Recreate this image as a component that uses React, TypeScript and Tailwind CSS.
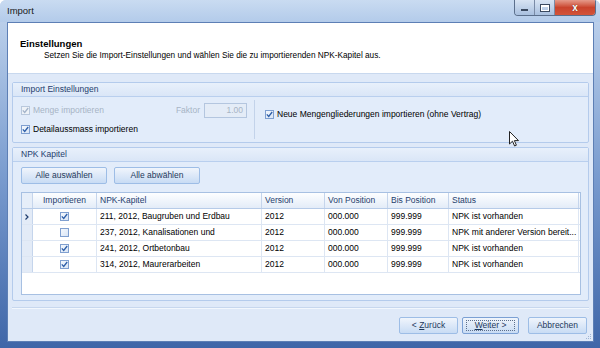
import React from "react";

const rows = [
  { checked: true, current: true, name: "211, 2012, Baugruben und Erdbau", version: "2012", von: "000.000", bis: "999.999", status: "NPK ist vorhanden" },
  { checked: false, current: false, name: "237, 2012, Kanalisationen und", version: "2012", von: "000.000", bis: "999.999", status: "NPK mit anderer Version bereit..." },
  { checked: true, current: false, name: "241, 2012, Ortbetonbau", version: "2012", von: "000.000", bis: "999.999", status: "NPK ist vorhanden" },
  { checked: true, current: false, name: "314, 2012, Maurerarbeiten", version: "2012", von: "000.000", bis: "999.999", status: "NPK ist vorhanden" },
];

const cols = "grid grid-cols-[11px_64px_165px_63px_63px_61px_130px]";

function Check({ checked, disabled }: { checked: boolean; disabled?: boolean }) {
  return (
    <span
      className={`inline-flex w-[9px] h-[9px] shrink-0 items-center justify-center border ${
        disabled ? "border-[#b9c8dc] bg-[#eef2f7]" : "border-[#7f9fd0] bg-gradient-to-br from-[#f4f8fd] to-[#d9e5f5]"
      }`}
    >
      {checked && (
        <svg width="7" height="7" viewBox="0 0 7 7">
          <path d="M0.8 3.4 L2.7 5.4 L6.2 1" fill="none" stroke={disabled ? "#a3b3c9" : "#2d5ea8"} strokeWidth="1.3" />
        </svg>
      )}
    </span>
  );
}

function Btn({ children, focus, w }: { children: React.ReactNode; focus?: boolean; w: string }) {
  return (
    <div
      className={`${w} h-[17px] flex items-center justify-center rounded-[2px] border bg-gradient-to-b from-[#f0f5fc] via-[#dce8f8] to-[#c8dcf4] text-[#1e395b] ${
        focus ? "border-[#7ba0d4]" : "border-[#9dbde6]"
      }`}
    >
      {focus ? (
        <span className="flex items-center justify-center w-[calc(100%-6px)] h-[11px] border border-dotted border-[#5c6f8c]">{children}</span>
      ) : (
        children
      )}
    </div>
  );
}

function Group({ title, children, className }: { title: string; children: React.ReactNode; className?: string }) {
  return (
    <div className={`border border-[#b4cbec] rounded-[2px] bg-[#e2ecfa] flex flex-col ${className ?? ""}`}>
      <div className="h-[14px] flex items-center px-[8px] bg-gradient-to-b from-[#e8f0fb] to-[#dae6f7] border-b border-[#b9cfee] text-[#1f3d6d]">
        {title}
      </div>
      {children}
    </div>
  );
}

export default function App() {
  return (
    <div
      className="relative w-[600px] h-[348px] overflow-hidden rounded-t-[6px] bg-gradient-to-b from-[#c3d6ee] via-[#7a9ccf] to-[#3f66a8] flex flex-col text-[8.5px] text-black"
      style={{ fontFamily: '"Liberation Sans", Arial, sans-serif' }}
    >
      {/* title bar */}
      <div className="h-[22px] shrink-0 flex items-start pl-[7px] bg-gradient-to-b from-[#c9dbf1] to-[#b3cbea]">
        <span className="mt-[4px] text-[9.5px] text-[#1a1a1a]">Import</span>
        <div className="ml-auto mr-[4px] flex h-[16px] rounded-b-[4px] border border-t-0 border-[#5b6f8c] overflow-hidden">
          <div className="w-[20px] flex items-center justify-center bg-gradient-to-b from-[#d8e4f3] to-[#a9c0df] border-r border-[#7a8ba6]">
            <span className="w-[7px] h-[2px] bg-white border border-[#3b4a60] mt-[4px]" />
          </div>
          <div className="w-[20px] flex items-center justify-center bg-gradient-to-b from-[#d8e4f3] to-[#a9c0df] border-r border-[#7a8ba6]">
            <span className="w-[8px] h-[6px] border-[1.5px] border-t-[2px] border-white outline outline-1 outline-[#3b4a60]" />
          </div>
          <div className="w-[40px] flex items-center justify-center bg-gradient-to-b from-[#e59a8a] via-[#c9432c] to-[#d3543a]">
            <span className="text-white text-[10px] font-bold leading-none" style={{ textShadow: "0 0 1px #4a1a10" }}>
              x
            </span>
          </div>
        </div>
      </div>

      {/* client */}
      <div className="flex-1 ml-[7px] mr-[6px] mb-[6px] border border-[#5d7fb5] bg-[#dfe9f8] flex flex-col">
        {/* header */}
        <div className="h-[51px] shrink-0 bg-white border-b border-[#c8d8ee] flex flex-col pl-[12px] pt-[15px]">
          <span className="text-[9.5px] font-bold leading-[11px]">Einstellungen</span>
          <span className="pl-[24px] leading-[11px] mt-[1px] text-[8.25px]">
            Setzen Sie die Import-Einstellungen und wählen Sie die zu importierenden NPK-Kapitel aus.
          </span>
        </div>

        {/* body */}
        <div className="flex-1 flex flex-col px-[4px] pt-[8px]">
          <Group title="Import Einstellungen" className="h-[61px]">
            <div className="flex flex-1 pl-[8px]">
              <div className="w-[226px] flex flex-col pt-[6px] gap-[5px]">
                <div className="flex items-center h-[15px]">
                  <Check checked disabled />
                  <span className="ml-[3px] text-[#a7b4c5]">Menge importieren</span>
                  <span className="ml-auto text-[#a7b4c5]">Faktor</span>
                  <div className="ml-[4px] w-[43px] h-[15px] border border-[#b4c6df] bg-[#e4ecf7] text-[#a7b4c5] flex items-center justify-end pr-[3px]">
                    1.00
                  </div>
                </div>
                <div className="flex items-center">
                  <Check checked />
                  <span className="ml-[3px]">Detailaussmass importieren</span>
                </div>
              </div>
              <div className="ml-[7px] mt-[3px] mb-[3px] w-px bg-[#c3d3ea]" />
              <div className="flex items-center h-[32px] pl-[10px] mt-[1px]">
                <Check checked />
                <span className="ml-[3px]">Neue Mengengliederungen importieren (ohne Vertrag)</span>
              </div>
            </div>
          </Group>

          <Group title="NPK Kapitel" className="mt-[4px] h-[154px]">
            <div className="flex flex-col px-[8px] pt-[5px]">
              <div className="flex gap-[7px] h-[17px]">
                <Btn w="w-[86px]">Alle auswählen</Btn>
                <Btn w="w-[86px]">Alle abwählen</Btn>
              </div>
              <div className="mt-[8px] h-[103px] w-[560px] border border-[#a7c0e2] bg-white overflow-hidden">
                <div className={`${cols} h-[16px] bg-gradient-to-b from-[#fdfeff] to-[#e3ecf8] border-b border-[#b6cbe8] text-[#1f3d6d]`}>
                  <div className="border-r border-[#c5d5ec] bg-[#e6eef9]" />
                  <div className="border-r border-[#c5d5ec] flex items-center justify-center">Importieren</div>
                  <div className="border-r border-[#c5d5ec] flex items-center px-[3px]">NPK-Kapitel</div>
                  <div className="border-r border-[#c5d5ec] flex items-center px-[3px]">Version</div>
                  <div className="border-r border-[#c5d5ec] flex items-center px-[3px]">Von Position</div>
                  <div className="border-r border-[#c5d5ec] flex items-center px-[3px]">Bis Position</div>
                  <div className="border-r border-[#c5d5ec] flex items-center px-[3px]">Status</div>
                </div>
                {rows.map((r) => (
                  <div key={r.name} className={`${cols} h-[16px] border-b border-[#dde6f3]`}>
                    <div className="border-r border-[#c5d5ec] bg-[#e3ebf7] flex items-center justify-center text-[#2b4a78]">
                      {r.current && (
                        <svg width="4" height="6" viewBox="0 0 4 6">
                          <path d="M0.5 0.5 L3 3 L0.5 5.5" fill="none" stroke="#1f3d6d" strokeWidth="1.2" />
                        </svg>
                      )}
                    </div>
                    <div className="border-r border-[#dde6f3] flex items-center justify-center">
                      <Check checked={r.checked} />
                    </div>
                    <div className="border-r border-[#dde6f3] flex items-center px-[3px] whitespace-nowrap overflow-hidden">{r.name}</div>
                    <div className="border-r border-[#dde6f3] flex items-center px-[3px]">{r.version}</div>
                    <div className="border-r border-[#dde6f3] flex items-center px-[3px]">{r.von}</div>
                    <div className="border-r border-[#dde6f3] flex items-center px-[3px]">{r.bis}</div>
                    <div className="border-r border-[#dde6f3] flex items-center px-[3px] whitespace-nowrap">{r.status}</div>
                  </div>
                ))}
              </div>
            </div>
          </Group>

          <div className="mt-[6px] border-t border-[#c7d7ee] shadow-[0_1px_0_#f2f7fd_inset] flex-1 flex justify-end items-start pt-[9px] pr-[2px] gap-[4px]">
            <Btn w="w-[59px]">
              <span>
                &lt; <span className="underline">Z</span>urück
              </span>
            </Btn>
            <Btn w="w-[57px]" focus>
              <span>
                <span className="underline">W</span>eiter &gt;
              </span>
            </Btn>
            <div className="ml-[5px]">
              <Btn w="w-[59px]">Abbrechen</Btn>
            </div>
          </div>
        </div>
      </div>

      {/* size grip */}
      <svg className="absolute right-[8px] bottom-[8px]" width="7" height="7" viewBox="0 0 7 7">
        <rect x="5" y="1" width="1" height="1" fill="#9fb5d5" />
        <rect x="3" y="3" width="1" height="1" fill="#9fb5d5" />
        <rect x="5" y="3" width="1" height="1" fill="#9fb5d5" />
        <rect x="1" y="5" width="1" height="1" fill="#9fb5d5" />
        <rect x="3" y="5" width="1" height="1" fill="#9fb5d5" />
        <rect x="5" y="5" width="1" height="1" fill="#9fb5d5" />
      </svg>

      {/* mouse cursor */}
      <svg className="absolute left-[509px] top-[131px]" width="11" height="17" viewBox="0 0 11 17">
        <path d="M0.5 0.5 L0.5 13 L3.5 10.2 L5.6 15 L7.4 14.2 L5.4 9.6 L9.5 9.6 Z" fill="white" stroke="#222" strokeWidth="1" strokeLinejoin="round" />
      </svg>
    </div>
  );
}
